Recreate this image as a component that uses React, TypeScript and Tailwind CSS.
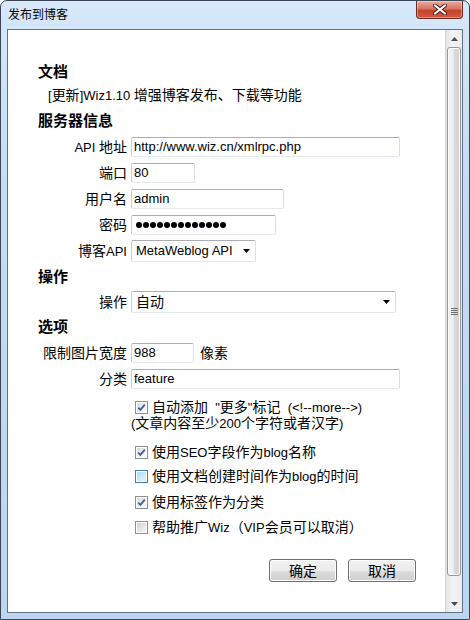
import React from 'react';

const FONT = "[font-family:'Liberation_Sans','Noto_Sans_CJK_SC',sans-serif]";

// CJK glyphs in the screenshot run a bit larger than the latin text, so wrap them
function mix(text: string) {
  return text.split(/([\u3000-\u303f\u4e00-\u9fff\uff00-\uffef]+)/).map((part, i) =>
    i % 2 === 1 ? (
      <span key={i} className="text-[14px]">
        {part}
      </span>
    ) : (
      part
    )
  );
}

// Win7 style text box
function TextBox({ className, children }: { className: string; children?: React.ReactNode }) {
  return (
    <div
      className={`h-[20px] ${className} flex items-center pl-[2px] rounded-[2px] border border-t-[#abadb3] border-l-[#c9ccd2] border-r-[#dbdfe6] border-b-[#e3e9ef] bg-white text-black whitespace-nowrap overflow-hidden`}
    >
      {children}
    </div>
  );
}

function Combo({ className, children }: { className: string; children: React.ReactNode }) {
  return (
    <div
      className={`h-[22px] ${className} flex items-center pl-[4px] pr-[5px] rounded-[2px] border border-t-[#abadb3] border-l-[#c9ccd2] border-r-[#dbdfe6] border-b-[#e3e9ef] bg-white`}
    >
      <span className="flex-1 whitespace-nowrap">{children}</span>
      <svg width="7" height="4" viewBox="0 0 7 4">
        <path d="M0 0 H7 L3.5 4 Z" fill="#000" />
      </svg>
    </div>
  );
}

function Row({ label, className, children }: { label: string; className: string; children: React.ReactNode }) {
  return (
    <div className={`flex items-center ${className}`}>
      <div className="w-[89px] shrink-0 text-right whitespace-nowrap">{mix(label)}</div>
      <div className="ml-[4px] flex items-center">{children}</div>
    </div>
  );
}

function Heading({ className, children }: { className: string; children: React.ReactNode }) {
  return <div className={`h-[16px] flex items-center font-bold text-[15px] ${className}`}>{children}</div>;
}

type BoxState = 'checked' | 'hover' | 'off';

function CheckBox({ state }: { state: BoxState }) {
  const outer = state === 'hover' ? 'border-[#3c7fb1]' : 'border-[#8f8f8f]';
  const inner =
    state === 'hover'
      ? 'bg-gradient-to-br from-[#b1dbf6] to-[#e8f5fd]'
      : state === 'off'
        ? 'bg-gradient-to-br from-[#d2d2d2] to-[#f4f4f4]'
        : 'bg-gradient-to-br from-[#dcdcdc] to-[#fcfcfc]';
  return (
    <div className={`w-[13px] h-[13px] shrink-0 border ${outer} bg-white p-[1px]`}>
      <div className={`w-full h-full ${inner} flex items-center justify-center`}>
        {state === 'checked' && (
          <svg width="9" height="9" viewBox="0 0 9 9">
            <path d="M1.2 4.6 L3.4 6.8 L7.8 1.6" fill="none" stroke="#4a5d9a" strokeWidth="1.8" />
          </svg>
        )}
      </div>
    </div>
  );
}

function CheckRow({ state, className, text }: { state: BoxState; className: string; text: string }) {
  return (
    <div className={`h-[16px] flex items-center ml-[97px] ${className}`}>
      <CheckBox state={state} />
      <span className="ml-[4px] whitespace-pre">{mix(text)}</span>
    </div>
  );
}

function Button({ children }: { children: string }) {
  return (
    <div className="w-[68px] h-[23px] flex items-center justify-center rounded-[3px] border border-[#707070] bg-[linear-gradient(180deg,#f2f2f2_0%,#ebebeb_50%,#dddddd_50%,#cfcfcf_100%)] shadow-[inset_0_0_0_1px_#fcfcfc]">
      {mix(children)}
    </div>
  );
}

function ScrollBar() {
  return (
    <div className="w-[17px] shrink-0 flex flex-col border-l border-[#d6d6d6] bg-[linear-gradient(90deg,#e3e3e3_0%,#f4f4f4_40%,#ececec_100%)]">
      <div className="h-[17px] flex items-center justify-center">
        <svg width="7" height="4" viewBox="0 0 7 4">
          <path d="M3.5 0 L7 4 H0 Z" fill="#4d4d4d" />
        </svg>
      </div>
      <div className="h-[529px] mx-[1px] rounded-[3px] border border-[#979797] bg-[linear-gradient(90deg,#f5f5f5_0%,#ececec_45%,#d9d9d9_55%,#d2d2d2_100%)] shadow-[inset_0_0_0_1px_#fafafa] flex items-center justify-center">
        <div className="flex flex-col gap-[1px]">
          <div className="w-[7px] h-[1px] bg-[#6e6e6e]" />
          <div className="w-[7px] h-[1px] bg-[#6e6e6e]" />
          <div className="w-[7px] h-[1px] bg-[#6e6e6e]" />
          <div className="w-[7px] h-[1px] bg-[#6e6e6e]" />
        </div>
      </div>
      <div className="flex-1" />
      <div className="h-[17px] flex items-center justify-center">
        <svg width="7" height="4" viewBox="0 0 7 4">
          <path d="M0 0 H7 L3.5 4 Z" fill="#4d4d4d" />
        </svg>
      </div>
    </div>
  );
}

export default function App() {
  const dots = Array.from({ length: 13 });

  return (
    <div className={`${FONT} w-[470px] h-[620px] flex flex-col rounded-t-[7px] border border-[#3a4656] bg-[linear-gradient(180deg,#d6e8f9_0%,#c6dcf3_30%,#bdd5ef_100%)] text-[13px] leading-[16px] text-black`}>
      {/* title bar */}
      <div className="h-[28px] shrink-0 flex items-start">
        <div className="pl-[7px] pt-[6px] text-[12px] leading-[16px]">发布到博客</div>
        <div className="ml-auto mr-[6px] w-[47px] h-[18px] rounded-b-[4px] border border-t-0 border-[#6a2b22] bg-[linear-gradient(180deg,#e8aca1_0%,#d87563_45%,#c4432c_55%,#cf5a3f_100%)] shadow-[inset_0_0_0_1px_rgba(255,255,255,0.35)] flex items-center justify-center">
          <svg width="16" height="11" viewBox="0 0 16 11">
            <path d="M3 1.5 L13 9.5 M13 1.5 L3 9.5" stroke="#4a1a14" strokeWidth="4" strokeLinecap="round" />
            <path d="M3 1.5 L13 9.5 M13 1.5 L3 9.5" stroke="#ffffff" strokeWidth="2.2" strokeLinecap="round" />
          </svg>
        </div>
      </div>

      {/* client area */}
      <div className="flex-1 mx-[6px] mb-[6px] flex border border-[#627286] bg-white">
        <div className="flex-1 flex flex-col pl-[30px]">
          <Heading className="mt-[34px]">文档</Heading>
          <div className="h-[16px] flex items-center ml-[10px] mt-[7px] whitespace-nowrap">
            <span>{mix('[更新]Wiz1.10 增强博客发布、下载等功能')}</span>
          </div>

          <Heading className="mt-[10px]">服务器信息</Heading>
          <Row label="API 地址" className="mt-[8px]">
            <TextBox className="w-[269px]">http://www.wiz.cn/xmlrpc.php</TextBox>
          </Row>
          <Row label="端口" className="mt-[6px]">
            <TextBox className="w-[64px]">80</TextBox>
          </Row>
          <Row label="用户名" className="mt-[6px]">
            <TextBox className="w-[153px]">admin</TextBox>
          </Row>
          <Row label="密码" className="mt-[6px]">
            <TextBox className="w-[145px]">
              <div className="flex gap-[1px] ml-[2px]">
                {dots.map((_, i) => (
                  <span key={i} className="w-[6px] h-[6px] rounded-full bg-black" />
                ))}
              </div>
            </TextBox>
          </Row>
          <Row label="博客API" className="mt-[5px]">
            <Combo className="w-[125px]">MetaWeblog API</Combo>
          </Row>

          <Heading className="mt-[7px]">操作</Heading>
          <Row label="操作" className="mt-[6px]">
            <Combo className="w-[265px]">{mix('自动')}</Combo>
          </Row>

          <Heading className="mt-[6px]">选项</Heading>
          <Row label="限制图片宽度" className="mt-[8px]">
            <TextBox className="w-[63px]">988</TextBox>
            <span className="ml-[6px]">{mix('像素')}</span>
          </Row>
          <Row label="分类" className="mt-[6px]">
            <TextBox className="w-[269px]">feature</TextBox>
          </Row>

          <CheckRow state="checked" className="mt-[10px]" text={'自动添加  "更多"标记  (<!--more-->)'} />
          <div className="h-[16px] flex items-center ml-[93px] whitespace-nowrap">
            <span>{mix('(文章内容至少200个字符或者汉字)')}</span>
          </div>
          <CheckRow state="checked" className="mt-[13px]" text="使用SEO字段作为blog名称" />
          <CheckRow state="hover" className="mt-[8px]" text="使用文档创建时间作为blog的时间" />
          <CheckRow state="checked" className="mt-[10px]" text="使用标签作为分类" />
          <CheckRow state="off" className="mt-[9px]" text="帮助推广Wiz（VIP会员可以取消）" />

          <div className="mt-[24px] flex justify-end gap-[11px] pr-[29px]">
            <Button>确定</Button>
            <Button>取消</Button>
          </div>
        </div>
        <ScrollBar />
      </div>
    </div>
  );
}
